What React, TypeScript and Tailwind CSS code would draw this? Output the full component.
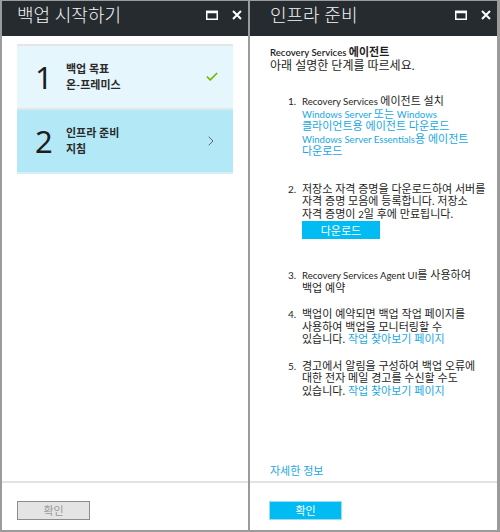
import type { ReactNode } from 'react';
import { Check, ChevronRight } from 'lucide-react';

const font = { fontFamily: 'Lato, "Noto Sans CJK KR", sans-serif' };
const titleFont = { fontFamily: '"Noto Sans", "Noto Sans CJK KR", sans-serif' };

// Latin runs sit a bit smaller than the Hangul, as in the original UI font
const E = ({ children }: { children: ReactNode }) => (
  <span className="text-[9.6px] leading-[0]">{children}</span>
);

const MaxIcon = () => (
  <svg width="12" height="10" viewBox="0 0 12 10" className="block">
    <rect x="0.75" y="1.5" width="10.5" height="7.75" fill="none" stroke="#fff" strokeWidth="1.5" />
    <rect x="0" y="0.75" width="12" height="2.5" fill="#fff" />
  </svg>
);

const CloseIcon = () => (
  <svg width="10" height="10" viewBox="0 0 10 10" className="block">
    <path d="M1 1 L9 9 M9 1 L1 9" stroke="#fff" strokeWidth="2" />
  </svg>
);

const Header = ({ title, pad }: { title: string; pad: string }) => (
  <div className={`flex h-[35px] shrink-0 items-start bg-[#262b30] ${pad}`}>
    <div style={titleFont} className="flex-1 pt-[1px] text-[18px] font-light leading-[26px] text-[#f4f4f4]">
      {title}
    </div>
    <div className="flex items-center gap-[14px] pt-[9px] pr-[6px]">
      <MaxIcon />
      <CloseIcon />
    </div>
  </div>
);

const Step = ({ n, title, sub, active }: { n: string; title: string; sub: string; active?: boolean }) => (
  <div
    className={`flex h-[64px] items-center pl-[18px] pr-[14px] ${
      active ? 'border-b-2 border-[#d6eef5] bg-[#b3e9f7]' : 'border-b-2 border-[#dfe7ea] bg-[#e5f6fd]'
    }`}
  >
    <div style={titleFont} className="w-[31px] text-[31px] leading-none text-[#1e1e1e]">
      {n}
    </div>
    <div className="flex-1 text-[11px] font-semibold leading-[16px] text-[#2a2a2a]">
      <p>{title}</p>
      <p>{sub}</p>
    </div>
    {active ? (
      <ChevronRight className="h-[16px] w-[16px] text-[#5a6570]" strokeWidth={1.5} />
    ) : (
      <Check className="h-[14px] w-[14px] text-[#7ab800]" strokeWidth={3} />
    )}
  </div>
);

const link = 'text-[#19a7e3]';
const num = 'w-[14px] shrink-0 text-[10px] leading-[12.5px]';

export default function App() {
  return (
    <div style={font} className="flex h-[532px] w-[500px] gap-[2px] bg-[#9b9b9b] pt-[1px] pr-[3px] pb-[2px] pl-[2px]">
      {/* 백업 시작하기 */}
      <div className="flex w-[246px] shrink-0 flex-col bg-white">
        <Header title="백업 시작하기" pad="pl-[15px]" />
        <div className="flex-1 px-[15px] pt-[8px]">
          <div className="border-t-2 border-[#e6e6e6]">
            <Step n="1" title="백업 목표" sub="온-프레미스" />
            <Step n="2" title="인프라 준비" sub="지침" active />
          </div>
        </div>
        <div className="h-[49px] border-t-2 border-[#e3e3e3] pl-[15px] pt-[14px]">
          <button className="h-[19px] w-[73px] border border-[#8c8c8c] bg-[#e4e4e4] text-[11px] leading-none text-[#9a9a9a]">
            확인
          </button>
        </div>
      </div>

      {/* 인프라 준비 */}
      <div className="flex min-w-0 flex-1 flex-col overflow-hidden bg-white">
        <Header title="인프라 준비" pad="pl-[20px]" />
        <div className="flex flex-1 flex-col whitespace-nowrap pl-[20px] pr-[10px] pt-[9px] text-[11px] leading-[13px] text-[#1e1e1e]">
          <p className="font-semibold">
            <E>Recovery Services </E>에이전트
          </p>
          <p className="text-[12px] leading-[15px]">아래 설명한 단계를 따르세요.</p>
          <ol className="mt-[22px] pl-[18px] leading-[12.5px]">
            <li className="flex">
              <span className={num}>1.</span>
              <div>
                <p>
                  <E>Recovery Services </E>에이전트 설치
                </p>
                <p className={link}>
                  <E>Windows Server </E>또는 <E>Windows</E>
                  <br />
                  클라이언트용 에이전트 다운로드
                </p>
                <p className={link}>
                  <E>Windows Server Essentials</E>용 에이전트
                  <br />
                  다운로드
                </p>
              </div>
            </li>
            <li className="mt-[25px] flex">
              <span className={num}>2.</span>
              <div>
                <p>
                  저장소 자격 증명을 다운로드하여 서버를
                  <br />
                  자격 증명 모음에 등록합니다. 저장소
                  <br />
                  자격 증명이 <E>2</E>일 후에 만료됩니다.
                </p>
                <button className="mt-[1px] h-[18px] w-[78px] bg-[#00bcf2] text-[11px] leading-none text-white">
                  다운로드
                </button>
              </div>
            </li>
            <li className="mt-[30px] flex">
              <span className={num}>3.</span>
              <p>
                <E>Recovery Services Agent UI</E>를 사용하여
                <br />
                백업 예약
              </p>
            </li>
            <li className="mt-[14px] flex">
              <span className={num}>4.</span>
              <p>
                백업이 예약되면 백업 작업 페이지를
                <br />
                사용하여 백업을 모니터링할 수
                <br />
                있습니다. <span className={link}>작업 찾아보기 페이지</span>
              </p>
            </li>
            <li className="mt-[14px] flex">
              <span className={num}>5.</span>
              <p>
                경고에서 알림을 구성하여 백업 오류에
                <br />
                대한 전자 메일 경고를 수신할 수도
                <br />
                있습니다. <span className={link}>작업 찾아보기 페이지</span>
              </p>
            </li>
          </ol>
          <p className={`mt-auto mb-[4px] ${link}`}>자세한 정보</p>
        </div>
        <div className="h-[49px] border-t-2 border-[#e3e3e3] pl-[19px] pt-[14px]">
          <button className="h-[19px] w-[73px] border border-[#9fdcf0] bg-[#00bcf2] text-[11px] leading-none text-white">
            확인
          </button>
        </div>
      </div>
    </div>
  );
}
